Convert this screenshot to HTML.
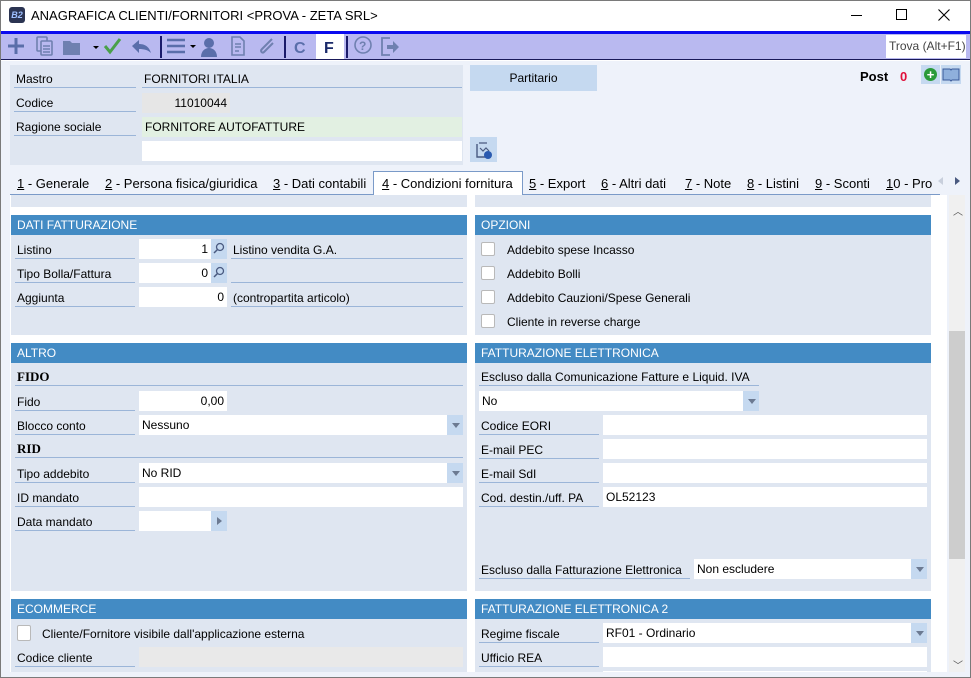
<!DOCTYPE html>
<html><head><meta charset="utf-8">
<style>
*{margin:0;padding:0;box-sizing:border-box}
body{width:971px;height:678px;overflow:hidden;background:#fff;font-family:"Liberation Sans",Tahoma,sans-serif;font-size:12px;color:#000;position:relative}
.a{position:absolute}
.win{left:0;top:0;width:971px;height:678px;border:1px solid #7a7a7a}
.lbl{position:absolute;border-bottom:1px solid #9bb5d8;height:20px;line-height:22px;padding-left:2px;font-size:12px;white-space:nowrap}
.inp{position:absolute;background:#fff;height:20px;line-height:20px;padding:0 3px;white-space:nowrap}
.r{text-align:right}
.btn{position:absolute;background:#c5d9f0;width:16px;height:20px}
.dd:after{content:"";position:absolute;left:5px;top:8px;border-left:4px solid transparent;border-right:4px solid transparent;border-top:5px solid #6c7a92}
.rt:after{content:"";position:absolute;left:6px;top:6px;border-top:4px solid transparent;border-bottom:4px solid transparent;border-left:5px solid #6c7a92}
.panel{position:absolute;background:#dfe6f1}
.hd{position:absolute;background:#438bc4;color:#fff;height:20px;line-height:21px;padding-left:6px;font-size:12px}
.cb{position:absolute;width:14px;height:14px;background:#fff;border:1px solid #b9b9b9;border-radius:2px}
.tab{position:absolute;top:176px;font-size:13px;white-space:nowrap}
.tab u{text-decoration:underline}
</style></head><body>
<div class="a win"></div>
<!-- title -->
<div class="a" style="left:9px;top:7px;width:16px;height:16px;background:#2b3452;border-radius:3px;color:#9fc0ff;font-size:9px;line-height:16px;text-align:center;font-style:italic;font-weight:bold">B2</div>
<div class="a" style="left:31px;top:8px;font-size:13px">ANAGRAFICA CLIENTI/FORNITORI &lt;PROVA - ZETA SRL&gt;</div>
<div class="a" style="left:851px;top:15px;width:11px;height:1px;background:#000"></div>
<div class="a" style="left:896px;top:9px;width:11px;height:11px;border:1px solid #000"></div>
<svg class="a" style="left:938px;top:9px" width="12" height="12"><path d="M0.5 0.5l11 11M11.5 0.5l-11 11" stroke="#000" stroke-width="1.1"/></svg>
<!-- toolbar -->
<div class="a" style="left:1px;top:31px;width:969px;height:3px;background:#0a0aef"></div>
<div class="a" style="left:1px;top:34px;width:969px;height:26px;background:#b9b9f0;border-bottom:1px solid #1a1a5a"></div>
<svg class="a" style="left:0;top:31px" width="420" height="30" viewBox="0 0 420 30">
<g fill="none" stroke="#5a6eaa" stroke-width="3">
<path d="M8 15h16M16 7v16"/>
</g>
<g fill="none" stroke="#6f80b0" stroke-width="1.6">
<rect x="37" y="6" width="10" height="14" rx="1"/><rect x="41" y="10" width="11" height="14" rx="1" fill="#b9b9f0"/>
<path d="M43 15h7M43 18h7M43 21h7"/>
</g>
<path d="M63 10h7l2 2h8v12H63z" fill="#6f80b0"/>
<path d="M93 15l3 3 3-3z" fill="#000"/>
<path d="M105 15l5 6 10-13" fill="none" stroke="#4aa04a" stroke-width="3"/>
<path d="M132 15l7-6v4c5 0 10 2 12 9-3-3-7-4-12-4v4z" fill="#5a6eaa"/>
<rect x="160" y="5" width="2" height="22" fill="#1a1a6a"/>
<path d="M167 9h18M167 15h18M167 21h18" stroke="#5a6eaa" stroke-width="2.5"/>
<path d="M190 14l3 3 3-3z" fill="#000"/>
<circle cx="209" cy="12" r="5" fill="#5a6eaa"/><path d="M201 26c0-6 4-9 8-9s8 3 8 9z" fill="#5a6eaa"/>
<g fill="none" stroke="#6f80b0" stroke-width="1.6"><path d="M232 6h8l4 4v14h-12z"/><path d="M235 13h6M235 16h6M235 20h4"/></g>
<path d="M272 8l-10 10c-2 2 0 5 2 3l9-9" fill="none" stroke="#6f80b0" stroke-width="2"/>
<rect x="284" y="5" width="2" height="22" fill="#1a1a6a"/>
<text x="294" y="22" font-family="Liberation Sans" font-weight="bold" font-size="16" fill="#5a6eaa">C</text>
<rect x="316" y="3" width="28" height="25" fill="#fff"/>
<text x="324" y="22" font-family="Liberation Sans" font-weight="bold" font-size="16" fill="#1a2a6a">F</text>
<rect x="346" y="5" width="2" height="22" fill="#1a1a6a"/>
<circle cx="363" cy="14" r="8" fill="none" stroke="#6f80b0" stroke-width="1.6"/>
<text x="359" y="19" font-family="Liberation Sans" font-weight="bold" font-size="12" fill="#6f80b0">?</text>
<path d="M390 7h-8v17h8" fill="none" stroke="#6f80b0" stroke-width="1.8"/><path d="M387 14h6v-4l6 6-6 6v-4h-6z" fill="#6f80b0"/>
</svg>
<div class="a" style="left:886px;top:35px;width:80px;height:23px;background:#fff;color:#444;font-size:12px;line-height:23px;padding-left:3px">Trova (Alt+F1)</div>
<!-- body bg -->
<div class="a" style="left:1px;top:61px;width:969px;height:616px;background:#eef2fa"></div>
<!-- header panel -->
<div class="panel" style="left:10px;top:65px;width:453px;height:100px"></div>
<div class="lbl" style="left:14px;top:68px;width:122px">Mastro</div>
<div class="lbl" style="left:142px;top:68px;width:320px">FORNITORI ITALIA</div>
<div class="lbl" style="left:14px;top:92px;width:122px">Codice</div>
<div class="inp r" style="left:142px;top:93px;width:88px;background:#e6e6e6">11010044</div>
<div class="lbl" style="left:14px;top:116px;width:122px">Ragione sociale</div>
<div class="inp" style="left:142px;top:117px;width:320px;background:#e2f0e2">FORNITORE AUTOFATTURE</div>
<div class="inp" style="left:142px;top:141px;width:320px"></div>
<div class="a" style="left:470px;top:65px;width:127px;height:26px;background:#c5d9f0;text-align:center;line-height:26px">Partitario</div>
<div class="a" style="left:470px;top:137px;width:27px;height:25px;background:#c5d9f0"></div>
<svg class="a" style="left:475px;top:140px" width="18" height="20"><path d="M2 4v13h8" fill="none" stroke="#4a5a80" stroke-width="1.4"/><path d="M4 3h8M5 8l3 3 3-3 3 3" fill="none" stroke="#4a5a80" stroke-width="1.2"/><circle cx="13" cy="15" r="4" fill="#2a5ab0"/></svg>
<div class="a" style="left:860px;top:69px;font-weight:bold;font-size:13px">Post</div>
<div class="a" style="left:900px;top:69px;font-weight:bold;font-size:13px;color:#e0103a">0</div>
<div class="a" style="left:921px;top:65px;width:19px;height:19px;background:#c5d9f0"></div>
<div class="a" style="left:924px;top:68px;width:13px;height:13px;border-radius:50%;background:#2a9a3a;color:#fff;font-weight:bold;font-size:13px;line-height:13px;text-align:center">+</div>
<div class="a" style="left:941px;top:65px;width:20px;height:19px;background:#c5d9f0"></div>
<svg class="a" style="left:942px;top:67px" width="18" height="15"><path d="M1 2h7l1 1 1-1h7v11h-7l-1 1-1-1H1z" fill="#8fb0dc" stroke="#3a5a9a"/></svg>
<!-- tabs -->
<div class="a" style="left:10px;top:194px;width:930px;height:1px;background:#7a9ac8"></div>
<div class="a" style="left:373px;top:171px;width:150px;height:24px;background:#fff;border:1px solid #7a9ac8;border-bottom:none"></div>
<div class="tab" style="left:17px"><u>1</u> - Generale</div>
<div class="tab" style="left:105px"><u>2</u> - Persona fisica/giuridica</div>
<div class="tab" style="left:273px"><u>3</u> - Dati contabili</div>
<div class="tab" style="left:382px"><u>4</u> - Condizioni fornitura</div>
<div class="tab" style="left:529px"><u>5</u> - Export</div>
<div class="tab" style="left:601px"><u>6</u> - Altri dati</div>
<div class="tab" style="left:685px"><u>7</u> - Note</div>
<div class="tab" style="left:747px"><u>8</u> - Listini</div>
<div class="tab" style="left:815px"><u>9</u> - Sconti</div>
<div class="tab" style="left:886px"><u>1</u>0 - Pro</div>
<div class="a" style="left:938px;top:177px;border-top:4px solid transparent;border-bottom:4px solid transparent;border-right:5px solid #c8cfdc"></div>
<div class="a" style="left:955px;top:177px;border-top:4px solid transparent;border-bottom:4px solid transparent;border-left:5px solid #4a5a80"></div>
<!-- content -->
<div class="a" style="left:10px;top:195px;width:937px;height:477px;background:#fff"></div>
<div class="a" style="left:949px;top:195px;width:16px;height:477px;background:#f0f0f0"></div>
<div class="a" style="left:949px;top:331px;width:16px;height:228px;background:#cdcdcd"></div>
<div class="a" style="left:953px;top:203px;font-size:10px;color:#555">︿</div>
<div class="a" style="left:953px;top:657px;font-size:10px;color:#555">﹀</div>
<div class="panel" style="left:11px;top:195px;width:456px;height:12px"></div>
<div class="panel" style="left:475px;top:195px;width:456px;height:12px"></div>
<!-- DATI FATTURAZIONE -->
<div class="panel" style="left:11px;top:215px;width:456px;height:120px"></div>
<div class="hd" style="left:11px;top:215px;width:456px">DATI FATTURAZIONE</div>
<div class="lbl" style="left:15px;top:239px;width:120px">Listino</div>
<div class="inp r" style="left:139px;top:239px;width:72px">1</div>
<div class="btn" style="left:211px;top:239px"><svg width="16" height="20"><circle cx="9" cy="8" r="3.5" fill="none" stroke="#4a5a80" stroke-width="1.3"/><path d="M6.5 10.5L3 14" stroke="#4a5a80" stroke-width="1.5"/></svg></div>
<div class="lbl" style="left:231px;top:239px;width:232px">Listino vendita G.A.</div>
<div class="lbl" style="left:15px;top:263px;width:120px">Tipo Bolla/Fattura</div>
<div class="inp r" style="left:139px;top:263px;width:72px">0</div>
<div class="btn" style="left:211px;top:263px"><svg width="16" height="20"><circle cx="9" cy="8" r="3.5" fill="none" stroke="#4a5a80" stroke-width="1.3"/><path d="M6.5 10.5L3 14" stroke="#4a5a80" stroke-width="1.5"/></svg></div>
<div class="lbl" style="left:231px;top:263px;width:232px"></div>
<div class="lbl" style="left:15px;top:287px;width:120px">Aggiunta</div>
<div class="inp r" style="left:139px;top:287px;width:88px">0</div>
<div class="lbl" style="left:231px;top:287px;width:232px">(contropartita articolo)</div>
<!-- OPZIONI -->
<div class="panel" style="left:475px;top:215px;width:456px;height:120px"></div>
<div class="hd" style="left:475px;top:215px;width:456px">OPZIONI</div>
<div class="cb" style="left:481px;top:242px"></div><div class="a" style="left:507px;top:243px">Addebito spese Incasso</div>
<div class="cb" style="left:481px;top:266px"></div><div class="a" style="left:507px;top:267px">Addebito Bolli</div>
<div class="cb" style="left:481px;top:290px"></div><div class="a" style="left:507px;top:291px">Addebito Cauzioni/Spese Generali</div>
<div class="cb" style="left:481px;top:314px"></div><div class="a" style="left:507px;top:315px">Cliente in reverse charge</div>
<!-- ALTRO -->
<div class="panel" style="left:11px;top:343px;width:456px;height:248px"></div>
<div class="hd" style="left:11px;top:343px;width:456px">ALTRO</div>
<div class="lbl" style="left:15px;top:366px;width:448px;font-weight:bold;font-family:'Liberation Serif',serif;font-size:13px">FIDO</div>
<div class="lbl" style="left:15px;top:391px;width:120px">Fido</div>
<div class="inp r" style="left:139px;top:391px;width:88px">0,00</div>
<div class="lbl" style="left:15px;top:415px;width:120px">Blocco conto</div>
<div class="inp" style="left:139px;top:415px;width:308px">Nessuno</div>
<div class="btn dd" style="left:447px;top:415px"></div>
<div class="lbl" style="left:15px;top:438px;width:448px;font-weight:bold;font-family:'Liberation Serif',serif;font-size:13px">RID</div>
<div class="lbl" style="left:15px;top:463px;width:120px">Tipo addebito</div>
<div class="inp" style="left:139px;top:463px;width:308px">No RID</div>
<div class="btn dd" style="left:447px;top:463px"></div>
<div class="lbl" style="left:15px;top:487px;width:120px">ID mandato</div>
<div class="inp" style="left:139px;top:487px;width:324px"></div>
<div class="lbl" style="left:15px;top:511px;width:120px">Data mandato</div>
<div class="inp" style="left:139px;top:511px;width:72px"></div>
<div class="btn rt" style="left:211px;top:511px"></div>
<!-- FATT ELETTRONICA -->
<div class="panel" style="left:475px;top:343px;width:456px;height:248px"></div>
<div class="hd" style="left:475px;top:343px;width:456px">FATTURAZIONE ELETTRONICA</div>
<div class="lbl" style="left:479px;top:366px;width:280px">Escluso dalla Comunicazione Fatture e Liquid. IVA</div>
<div class="inp" style="left:479px;top:391px;width:264px">No</div>
<div class="btn dd" style="left:743px;top:391px"></div>
<div class="lbl" style="left:479px;top:415px;width:120px">Codice EORI</div>
<div class="inp" style="left:603px;top:415px;width:324px"></div>
<div class="lbl" style="left:479px;top:439px;width:120px">E-mail PEC</div>
<div class="inp" style="left:603px;top:439px;width:324px"></div>
<div class="lbl" style="left:479px;top:463px;width:120px">E-mail SdI</div>
<div class="inp" style="left:603px;top:463px;width:324px"></div>
<div class="lbl" style="left:479px;top:487px;width:120px">Cod. destin./uff. PA</div>
<div class="inp" style="left:603px;top:487px;width:324px">OL52123</div>
<div class="lbl" style="left:479px;top:559px;width:211px">Escluso dalla Fatturazione Elettronica</div>
<div class="inp" style="left:694px;top:559px;width:217px">Non escludere</div>
<div class="btn dd" style="left:911px;top:559px"></div>
<!-- ECOMMERCE -->
<div class="panel" style="left:11px;top:599px;width:456px;height:73px"></div>
<div class="hd" style="left:11px;top:599px;width:456px">ECOMMERCE</div>
<div class="cb" style="left:17px;top:625px;height:16px"></div>
<div class="a" style="left:42px;top:627px">Cliente/Fornitore visibile dall'applicazione esterna</div>
<div class="lbl" style="left:15px;top:647px;width:120px">Codice cliente</div>
<div class="inp" style="left:139px;top:647px;width:324px;background:#e9e9e9"></div>
<!-- FE2 -->
<div class="panel" style="left:475px;top:599px;width:456px;height:73px"></div>
<div class="hd" style="left:475px;top:599px;width:456px">FATTURAZIONE ELETTRONICA 2</div>
<div class="lbl" style="left:479px;top:623px;width:120px">Regime fiscale</div>
<div class="inp" style="left:603px;top:623px;width:308px">RF01 - Ordinario</div>
<div class="btn dd" style="left:911px;top:623px"></div>
<div class="lbl" style="left:479px;top:647px;width:120px">Ufficio REA</div>
<div class="inp" style="left:603px;top:647px;width:324px"></div>
<div class="inp" style="left:603px;top:671px;width:324px;height:1px"></div>
</body></html>
